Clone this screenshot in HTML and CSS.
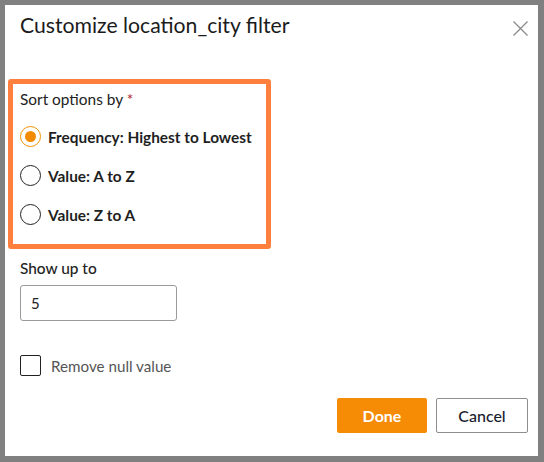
FILE: index.html
```html
<!DOCTYPE html>
<html>
<head>
<meta charset="utf-8">
<link rel="stylesheet" href="styles.css">
</head>
<body>
<div class="frame">
  <div class="header">
    <h1 class="title">Customize location_city filter</h1>
    <svg class="close" width="15" height="15" viewBox="0 0 15 15"><path d="M0.5 0.5L14.5 14.5M14.5 0.5L0.5 14.5" stroke="#8a8a8a" stroke-width="1.3" fill="none"/></svg>
  </div>
  <div class="sortbox">
    <div class="label">Sort options by <span class="req">*</span></div>
    <div class="radios">
      <div class="radio-row"><span class="radio checked"><span class="dot"></span></span><span class="rlabel">Frequency: Highest to Lowest</span></div>
      <div class="radio-row"><span class="radio"></span><span class="rlabel">Value: A to Z</span></div>
      <div class="radio-row"><span class="radio"></span><span class="rlabel">Value: Z to A</span></div>
    </div>
  </div>
  <div class="showup">
    <div class="label2">Show up to</div>
    <div class="input">5</div>
  </div>
  <div class="check-row"><span class="checkbox"></span><span class="clabel">Remove null value</span></div>
  <div class="buttons">
    <div class="btn done">Done</div>
    <div class="btn cancel">Cancel</div>
  </div>
</div>
</body>
</html>
```
FILE: styles.css
```css
html, body { margin: 0; padding: 0; }
body { font-family: "Lato", "Noto Sans", sans-serif; color: #1b1b1b; }
.frame {
  width: 544px; height: 462px; box-sizing: border-box;
  border: 5px solid #808080; border-right-width: 6px; border-bottom-width: 6px;
  background: #fff; display: flex; flex-direction: column;
}
.header { display: flex; justify-content: space-between; align-items: flex-start; padding: 7px 10px 0 15px; height: 74px; box-sizing: border-box; }
.title { margin: 0; font-size: 21.2px; font-weight: 400; line-height: 26px; color: #1b1b1b; }
.close { margin-top: 9px; }
.sortbox {
  margin-left: 3px; width: 263px; height: 170px; box-sizing: border-box;
  border: 5px solid #ff7f3f; border-radius: 3px; padding: 5px 0 0 7px;
}
.label { font-size: 15.4px; line-height: 20px; color: #222; }
.req { color: #b3202a; }
.radios { display: flex; flex-direction: column; gap: 18px; margin-top: 17px; }
.radio-row { display: flex; align-items: center; gap: 7px; height: 21px; }
.radio { width: 21px; height: 21px; box-sizing: border-box; border: 1.5px solid #222; border-radius: 50%; display: flex; align-items: center; justify-content: center; }
.radio.checked { border-color: #f39200; }
.dot { width: 11px; height: 11px; border-radius: 50%; background: #f38b00; }
.rlabel { font-size: 15.4px; font-weight: 700; color: #1f1f1f; }
.showup { padding: 9px 0 0 15px; }
.label2 { font-size: 15.4px; line-height: 20px; font-weight: 500; color: #222; }
.input {
  margin-top: 7px; width: 157px; height: 36px; box-sizing: border-box;
  border: 1px solid #9a9a9a; border-radius: 3px; padding-left: 10px;
  font-size: 15px; line-height: 34px; color: #222;
}
.check-row { display: flex; align-items: center; gap: 10px; padding: 34px 0 0 15px; height: 21px; }
.checkbox { width: 21px; height: 21px; box-sizing: border-box; border: 1.5px solid #222; border-radius: 2px; }
.clabel { font-size: 15.2px; color: #555; }
.buttons { display: flex; justify-content: flex-end; gap: 9px; padding: 22px 10px 0 0; }
.btn { height: 35px; box-sizing: border-box; border-radius: 2px; display: flex; align-items: center; justify-content: center; font-size: 16px; }
.done { width: 90px; background: #f68b06; color: #fff; font-weight: 700; }
.cancel { width: 92px; border: 1px solid #8e8e8e; color: #1a1d2e; font-weight: 500; }
```
